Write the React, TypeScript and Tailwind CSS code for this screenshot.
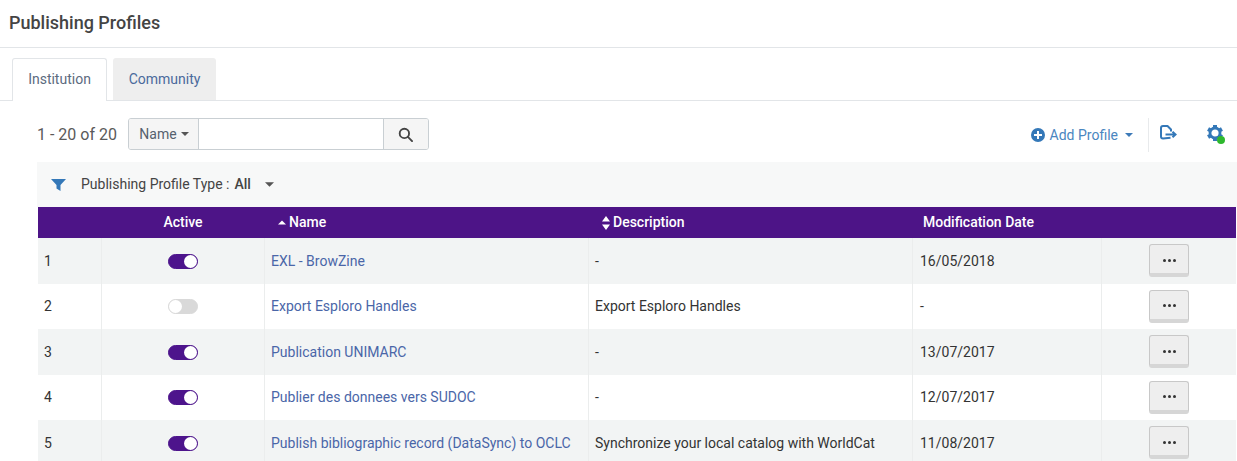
import React from "react";

const rows = [
  { n: 1, on: true, name: "EXL - BrowZine", desc: "-", date: "16/05/2018" },
  { n: 2, on: false, name: "Export Esploro Handles", desc: "Export Esploro Handles", date: "-" },
  { n: 3, on: true, name: "Publication UNIMARC", desc: "-", date: "13/07/2017" },
  { n: 4, on: true, name: "Publier des donnees vers SUDOC", desc: "-", date: "12/07/2017" },
  { n: 5, on: true, name: "Publish bibliographic record (DataSync) to OCLC", desc: "Synchronize your local catalog with WorldCat", date: "11/08/2017" },
];

function Caret({ className }: { className: string }) {
  return (
    <svg viewBox="0 0 10 5" className={className} fill="currentColor">
      <path d="M0 0h10L5 5z" />
    </svg>
  );
}

function Toggle({ on }: { on: boolean }) {
  return on ? (
    <div className="flex h-[15px] w-[30px] items-center justify-end rounded-full border border-[#4d148c] bg-[#4d148c]">
      <div className="h-[13px] w-[13px] rounded-full bg-white" />
    </div>
  ) : (
    <div className="flex h-[15px] w-[30px] items-center justify-start rounded-full border border-[#d9d9d9] bg-[#d9d9d9]">
      <div className="h-[13px] w-[13px] rounded-full bg-white" />
    </div>
  );
}

export default function App() {
  return (
    <div className="h-[461px] w-[1237px] overflow-hidden bg-white font-['Roboto',sans-serif] text-[14px] text-[#333]">
      <div className="flex h-[48px] items-center border-b border-[#e2e5e8] pb-[3px] pl-[9px] text-[18px] font-medium text-[#444]">
        Publishing Profiles
      </div>

      <div className="flex h-[53px] items-end gap-[6px] border-b border-[#e2e5e8] pl-[12px]">
        <div className="mb-[-1px] flex h-[43px] w-[95px] items-center justify-center rounded-t-[3px] border border-b-0 border-[#e2e5e8] bg-white pb-[2px] text-[#5c6b80]">
          Institution
        </div>
        <div className="flex h-[42px] w-[103px] items-center justify-center rounded-t-[3px] bg-[#eeeeee] text-[#4a6a9c]">
          Community
        </div>
      </div>

      <div className="flex h-[61px] items-start pl-[37px] pt-[17px]">
        <div className="flex h-[32px] w-[91px] items-center pt-[1px] text-[16px] text-[#5a5a5a]">1 - 20 of 20</div>
        <div className="flex h-[32px] w-[301px] overflow-hidden rounded-[3px] border border-[#c9cfd3]">
          <div className="flex w-[70px] items-center justify-center gap-[4px] border-r border-[#c9cfd3] bg-[#f5f5f5] pl-[1px] text-[#56616e]">
            Name
            <Caret className="h-[4px] w-[8px] text-[#555]" />
          </div>
          <div className="flex-1 bg-white" />
          <div className="flex w-[45px] items-center justify-center border-l border-[#c9cfd3] bg-[#f5f5f5] pr-[2px]">
            <svg viewBox="0 0 16 16" className="h-[15px] w-[15px]" fill="none" stroke="#444" strokeWidth="2">
              <circle cx="6.8" cy="6.8" r="5" />
              <path d="M10.5 10.5 15 15" strokeLinecap="round" />
            </svg>
          </div>
        </div>
        <div className="ml-auto flex items-start">
          <div className="flex h-[34px] items-center gap-[4px] pr-[15px] text-[#4a86c0]">
            <svg viewBox="0 0 14 14" className="mr-[1px] h-[14px] w-[14px]">
              <circle cx="7" cy="7" r="7" fill="#3478b8" />
              <path d="M3 7h8M7 3v8" stroke="#fff" strokeWidth="2" />
            </svg>
            <span>Add Profile</span>
            <Caret className="ml-[3px] h-[4px] w-[8px] text-[#3d7ab8]" />
          </div>
          <div className="flex h-[34px] w-[59px] items-start justify-start border-l border-[#e8eaec] pl-[11px] pt-[7px]">
            <svg viewBox="0 0 17 15" className="h-[15px] w-[17px]" fill="none" stroke="#3478b8" strokeWidth="2">
              <path d="M10.500 12.800 3 13.500Q1 13.500 1 11.500V3Q1 1 3 1H7.500L11 4.500V6.500" strokeLinejoin="round" />
              <path d="M5.500 9.500h9.500M12.500 6.800l3 2.700-3 2.700" />
            </svg>
          </div>
          <div className="relative mr-[12px] mt-[7px] h-[18px] w-[18px]">
            <svg viewBox="0 0 16 16" className="h-[16px] w-[16px]" fill="#3478b8">
              <circle cx="8" cy="8" r="5" fill="none" stroke="#3478b8" strokeWidth="2.800" />
              <rect x="6" y="0" width="4" height="3.500" />
              <rect x="6" y="0" width="4" height="3.500" transform="rotate(60 8 8)" />
              <rect x="6" y="0" width="4" height="3.500" transform="rotate(120 8 8)" />
              <rect x="6" y="0" width="4" height="3.500" transform="rotate(180 8 8)" />
              <rect x="6" y="0" width="4" height="3.500" transform="rotate(240 8 8)" />
              <rect x="6" y="0" width="4" height="3.500" transform="rotate(300 8 8)" />
            </svg>
            <div className="absolute bottom-[-1px] right-[0.500px] h-[8px] w-[8px] rounded-full bg-[#2eb82e]" />
          </div>
        </div>
      </div>

      <div className="ml-[37px] w-[1200px]">
        <div className="flex h-[45px] items-center gap-[4px] bg-[#f7f8f8] pl-[14px]">
          <svg viewBox="0 0 15 12" className="h-[12px] w-[15px]" fill="#3478b8">
            <path d="M0 0h15L9.500 6v6L5.500 9.500V6z" />
          </svg>
          <span className="ml-[11px] text-[#444]">Publishing Profile Type :</span>
          <span className="ml-[1px] font-medium text-[#444]">All</span>
          <Caret className="ml-[10px] h-[5px] w-[9px] text-[#555]" />
        </div>

        <div className="ml-[1px] flex h-[31px] w-[1198px] items-center bg-[#4d1487] font-medium text-white">
          <div className="w-[63px]" />
          <div className="w-[163px] pl-[1px] text-center">Active</div>
          <div className="flex w-[324px] items-center gap-[3px] pl-[14px]">
            <Caret className="h-[5px] w-[8px] rotate-180 text-white" />
            Name
          </div>
          <div className="flex w-[324px] items-center gap-[3px] pl-[14px]">
            <svg viewBox="0 0 8 14" className="h-[14px] w-[8px]" fill="#fff">
              <path d="M4 0l4 5.500H0zM4 14l4-5.500H0z" />
            </svg>
            Description
          </div>
          <div className="pl-[11px]">Modification Date</div>
        </div>

        {rows.map((r, i) => {
          const text = i % 2 === 0 ? "pt-[2px]" : "pt-0";
          return (
            <div
              key={r.n}
              className={`ml-[1px] flex h-[45.5px] w-[1198px] items-stretch ${i % 2 === 0 ? "bg-[#f2f4f4]" : "bg-white"}`}
            >
              <div className={`flex w-[64px] items-center border-r border-[#ebeded] pl-[6px] ${text}`}>{r.n}</div>
              <div className={`flex w-[163px] items-center justify-center border-r border-[#ebeded] ${text}`}>
                <Toggle on={r.on} />
              </div>
              <div className={`flex w-[324px] items-center border-r border-[#ebeded] pl-[6px] text-[#4a66a8] ${text}`}>{r.name}</div>
              <div className={`flex w-[324px] items-center border-r border-[#ebeded] pl-[6px] ${text}`}>{r.desc}</div>
              <div className={`flex w-[189px] items-center border-r border-[#ebeded] pl-[7px] ${text}`}>{r.date}</div>
              <div className="flex flex-1 items-start justify-center pt-[6px]">
                <div className="flex h-[33px] w-[40px] items-center justify-center rounded-[3px] border border-[#c8c8c8] border-b-[4px] border-b-[#d6d6d6] bg-[#eeeeee] pt-[2px]">
                  <svg viewBox="0 0 13 3" className="h-[3px] w-[13px]" fill="#333">
                    <circle cx="1.500" cy="1.500" r="1.500" />
                    <circle cx="6.500" cy="1.500" r="1.500" />
                    <circle cx="11.500" cy="1.500" r="1.500" />
                  </svg>
                </div>
              </div>
            </div>
          );
        })}
      </div>
    </div>
  );
}
